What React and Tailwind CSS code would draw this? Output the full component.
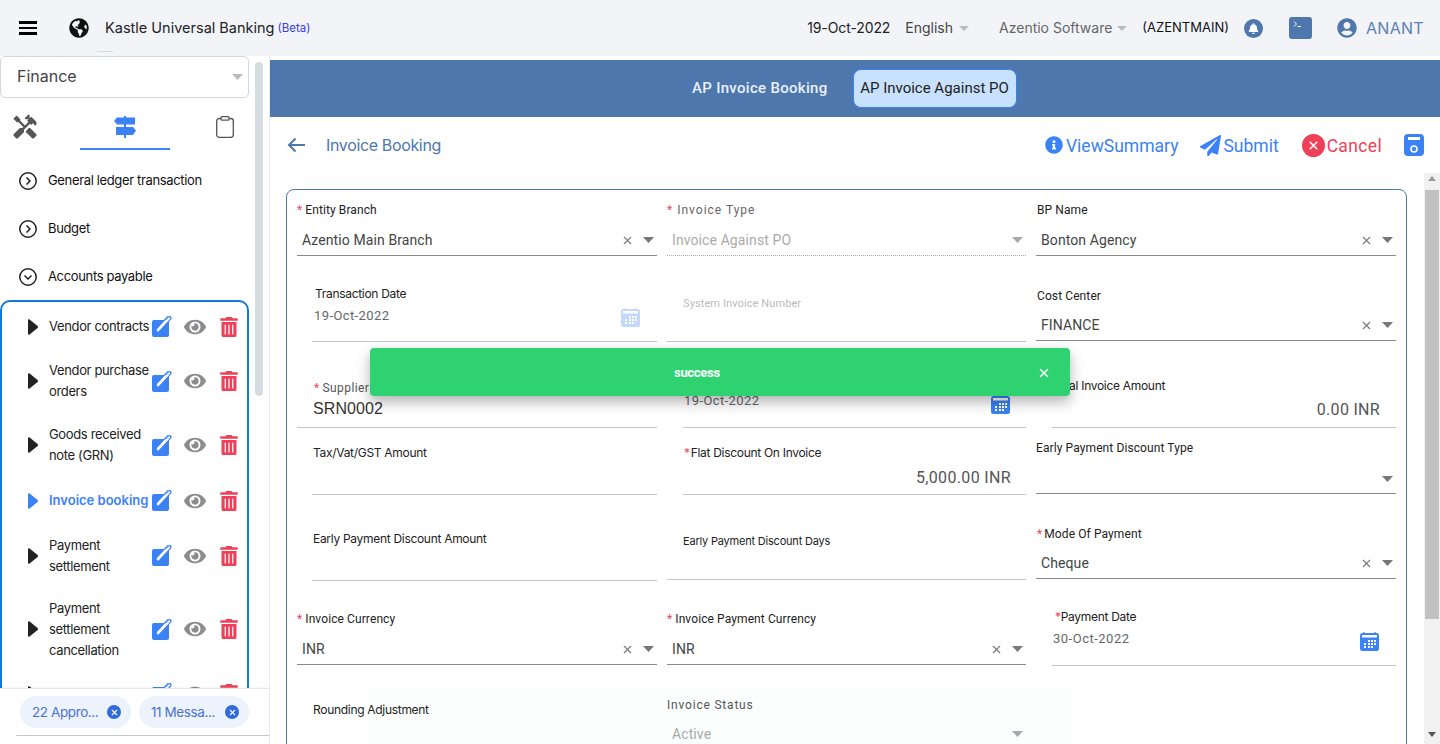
import { X } from 'lucide-react'
import {
  FaBell,
  FaEye,
  FaGlobeAmericas,
  FaInfoCircle,
  FaPaperPlane,
  FaTrashAlt,
  FaUserCircle,
} from 'react-icons/fa'
import { MdHandyman } from 'react-icons/md'

function Caret({ className = 'w-[11px] h-[6px] fill-[#777]' }) {
  return (
    <svg viewBox="0 0 12 7" preserveAspectRatio="none" className={className}>
      <path d="M0 0h12L6 7z" />
    </svg>
  )
}

function CircleChevron({ down }) {
  return (
    <svg viewBox="0 0 18 18" className="w-[18px] h-[18px] shrink-0 fill-none stroke-[#222] stroke-[1.5]">
      <circle cx="9" cy="9" r="8.200" />
      <path d={down ? 'M5.500 7.500 9 11l3.500-3.500' : 'M7.500 5.500 11 9l-3.500 3.500'} />
    </svg>
  )
}

function EditIcon() {
  return (
    <svg viewBox="0 0 20 21" className="w-5 h-[21px]">
      <rect x="0" y="4" width="17" height="17" rx="2" fill="#3b82f6" />
      <path d="M5 15 17 2" stroke="#3b82f6" strokeWidth="5" strokeLinecap="round" />
      <path d="M6 14 17 2" stroke="#fff" strokeWidth="2.600" strokeLinecap="round" />
      <path d="M13.500 4 19 0" stroke="#3b82f6" strokeWidth="0.800" />
    </svg>
  )
}

function SignsIcon() {
  return (
    <svg viewBox="0 0 24 22" className="w-6 h-[22px] fill-[#3b82f6]">
      <path d="M1 5 4 1.500h18v7H4z" />
      <path d="M3 11h17l3 3.500-3 4.500H3z" />
      <rect x="11" y="0" width="2" height="22" />
    </svg>
  )
}

function ClipboardIcon() {
  return (
    <svg viewBox="0 0 18 22" className="w-[18px] h-[22px] fill-none stroke-[#555] stroke-[1.300]">
      <rect x="0.700" y="2.500" width="16.600" height="18.800" rx="2.500" />
      <rect x="5" y="0.700" width="8" height="3.500" rx="1" fill="#fff" />
    </svg>
  )
}

function CalendarIcon({ faded }) {
  return (
    <svg viewBox="0 0 19 19" className={faded ? 'w-[19px] h-[19px] opacity-30 shrink-0' : 'w-[19px] h-[19px] shrink-0'}>
      <rect x="0" y="1" width="19" height="18" rx="2.500" fill="#3b82f6" />
      <rect x="2" y="3" width="15" height="2.500" fill="#fff" />
      <path d="M4 0v2M15 0v2" stroke="#3b82f6" strokeWidth="1.200" />
      <path
        d="M8 8h2v2H8zM11 8h2v2h-2zM14 8h2v2h-2zM4 11h2v2H4zM8 11h2v2H8zM11 11h2v2h-2zM14 11h2v2h-2zM4 14h2v2H4zM8 14h2v2H8zM11 14h2v2h-2z"
        fill="#fff"
      />
    </svg>
  )
}

function MenuRow({ label, height, active }) {
  return (
    <div className={`flex items-center pl-[26px] ${height}`}>
      <svg viewBox="0 0 10 16" className={active ? 'w-2.5 h-4 shrink-0 fill-[#3b82f6]' : 'w-2.5 h-4 shrink-0 fill-[#222]'}>
        <path d="M0 1.200C0 .2 1 0 1.600.4l8 6.600c.5.5.5 1.500 0 2l-8 6.600C1 16 0 15.800 0 14.800z" />
      </svg>
      <div
        className={
          active
            ? 'w-[103px] ml-[11px] text-[13px] leading-[21px] font-semibold text-[#3b82f6] whitespace-nowrap'
            : 'w-[103px] ml-[11px] text-[13px] leading-[21px] tracking-[-0.35px] text-[#222]'
        }
      >
        {label}
      </div>
      <EditIcon />
      <FaEye className="ml-3 text-[22px] text-[#8c8c8f] shrink-0" />
      <FaTrashAlt className="ml-[13px] text-[20px] text-[#ee4058] shrink-0" />
    </div>
  )
}

function Sidebar() {
  const groups = [
    { label: 'General ledger transaction' },
    { label: 'Budget' },
    { label: 'Accounts payable', open: true },
  ]
  const rows = [
    { label: 'Vendor contracts', height: 'h-[46px]' },
    { label: 'Vendor purchase orders', height: 'h-[63px]' },
    { label: 'Goods received note (GRN)', height: 'h-[65px]' },
    { label: 'Invoice booking', height: 'h-[46px]', active: true },
    { label: 'Payment settlement', height: 'h-[64px]' },
    { label: 'Payment settlement cancellation', height: 'h-[83px]' },
    { label: '', height: 'h-[46px]' },
  ]
  return (
    <aside className="w-[270px] h-[688px] shrink-0 flex flex-col border-r border-[#e8eaee] font-['Inter',sans-serif]">
      <div className="flex h-[632px] overflow-hidden shrink-0">
        <div className="w-[249px] shrink-0">
          <div className="h-[42px] flex items-center justify-between pl-4 pr-[5px] rounded-[5px] border border-[#d5d7dc] text-[16px] text-[#444]">
            <span className="mb-[2px]">Finance</span>
            <Caret className="w-[11px] h-[6px] fill-[#bbb]" />
          </div>
          <div className="h-[52px] flex">
            <div className="w-[80px] pl-[11px] pt-[15px]">
              <MdHandyman className="text-[28px] text-[#555]" />
            </div>
            <div className="w-[90px] flex justify-center pt-[18px] border-b-2 border-[#3b82f6]">
              <SignsIcon />
            </div>
            <div className="w-[79px] pl-[46px] pt-[18px]">
              <ClipboardIcon />
            </div>
          </div>
          <div className="pt-[7px]">
            {groups.map((g) => (
              <div key={g.label} className="h-[48px] flex items-center gap-[11px] pl-[19px] text-[13px] tracking-[-0.35px] text-[#111]">
                <CircleChevron down={g.open} />
                {g.label}
              </div>
            ))}
          </div>
          <div className="mt-[-1.5px] h-[420px] rounded-t-[10px] border-2 border-[#0f7bd6] pt-[2px]">
            {rows.map((r, i) => (
              <MenuRow key={i} {...r} />
            ))}
          </div>
        </div>
        <div className="w-2 h-[334px] mt-[6px] ml-[6px] rounded bg-[#d5dde0]" />
      </div>
      <div className="h-[56px] border-t border-[#e6e6e6] pt-[7px] shadow-[0_-1px_2px_rgba(0,0,0,0.04)]">
        <div className="flex gap-2 pl-5">
          <div className="w-[111px] h-8 rounded-2xl bg-[#edf3fd] flex items-center justify-between pl-3 pr-[10px] text-[13.500px] text-[#4a72d6] tracking-[-0.4px]">
            <span>22 Appro...</span>
            <span className="w-[14px] h-[14px] rounded-full bg-[#2f6bdc] flex items-center justify-center">
              <X size={9} color="#fff" strokeWidth={3} />
            </span>
          </div>
          <div className="w-[110px] h-8 rounded-2xl bg-[#edf3fd] flex items-center justify-between pl-3 pr-[10px] text-[13.500px] text-[#4a72d6] tracking-[-0.4px]">
            <span>11 Messa...</span>
            <span className="w-[14px] h-[14px] rounded-full bg-[#2f6bdc] flex items-center justify-center">
              <X size={9} color="#fff" strokeWidth={3} />
            </span>
          </div>
        </div>
        <div className="ml-4 mt-[7px] border-t border-[#c8c8c8]" />
      </div>
    </aside>
  )
}

function Header() {
  return (
    <header className="h-14 bg-[#f3f4f8] flex items-center font-['Inter',sans-serif]">
      <div className="ml-[19px] w-[18px] flex flex-col gap-[3px]">
        <div className="h-[2.500px] bg-black" />
        <div className="h-[2.500px] bg-black" />
        <div className="h-[2.500px] bg-black" />
      </div>
      <FaGlobeAmericas className="ml-[32px] text-[20px] text-[#111]" />
      <div className="ml-4 text-[14.500px] text-[#222]">Kastle Universal Banking</div>
      <div className="ml-[3px] mt-[2px] text-[11.500px] text-[#3b3bf0]">(Beta)</div>
      <div className="ml-auto flex items-center pr-4">
        <div className="mb-[2px] text-[14px] tracking-[-0.1px] text-[#222]">19-Oct-2022</div>
        <div className="ml-[15px] mb-[2px] text-[14px] text-[#444]">English</div>
        <Caret className="ml-[6px] w-[10px] h-[5px] fill-[#bbb]" />
        <div className="ml-[30px] mb-[2px] text-[14px] text-[#666]">Azentio Software</div>
        <Caret className="ml-[5px] w-[10px] h-[5px] fill-[#bbb]" />
        <div className="ml-[15px] text-[13px] text-[#111]">(AZENTMAIN)</div>
        <div className="ml-[15px] w-[19px] h-[19px] rounded-full bg-[#4e77ad] flex items-center justify-center">
          <FaBell className="text-[11px] text-white" />
        </div>
        <div className="ml-[26px] w-[23px] h-[22px] rounded-[3px] bg-[#4e77ad] flex items-start pl-1 pt-1">
          <svg viewBox="0 0 9 7" className="w-[9px] h-[7px] fill-none stroke-white">
            <path d="M1 0.500 3.500 3 1 5.500M4.500 5.500H8" />
          </svg>
        </div>
        <FaUserCircle className="ml-[25px] text-[20px] text-[#4e77ad]" />
        <div className="ml-[9px] text-[16px] text-[#5a82b4] tracking-[0.3px]">ANANT</div>
      </div>
    </header>
  )
}

function Req({ className = 'mr-[3px]' }) {
  return <span className={`text-[#ef4561] ${className}`}>*</span>
}

function SelectRow({ value, muted, noClear, className = 'mb-[5px] pl-[5px]' }) {
  return (
    <div className={`mt-auto h-5 flex items-center pr-[3px] text-[14px] leading-5 tracking-[0.1px] ${className}`}>
      <span className={muted ? 'flex-1 text-[#aaa]' : 'flex-1 text-[#444]'}>{value}</span>
      {!muted && !noClear && <X size={13} color="#777" className="mr-[9px]" />}
      <Caret className={muted ? 'w-[11px] h-[6px] fill-[#aaa]' : 'w-[11px] h-[6px] fill-[#777]'} />
    </div>
  )
}

function Field({ className = 'border-[#8a8a8a]', children }) {
  return <div className={`flex flex-col min-w-0 text-[12px] leading-4 tracking-[0.1px] text-[#222] border-b ${className}`}>{children}</div>
}

const soft = 'border-[#c4c4c4]'
const inter = "font-['Inter',sans-serif] tracking-[-0.3px]"

function FormGrid() {
  const row = 'grid grid-cols-[360px_359px_360px] gap-x-[10px]'
  return (
    <div className="pl-[10px] font-['Roboto',sans-serif]">
      <div className={`${row} h-[66px]`}>
        <Field>
          <div className="pt-3"><Req />Entity Branch</div>
          <SelectRow value="Azentio Main Branch" />
        </Field>
        <Field className="border-dotted border-[#aaa]">
          <div className="pt-3 tracking-[1px] text-[#666]"><Req className="mr-[4px]" />Invoice Type</div>
          <SelectRow value="Invoice Against PO" muted />
        </Field>
        <Field>
          <div className="pt-3 pl-px">BP Name</div>
          <SelectRow value="Bonton Agency" className="mb-[5px] pl-[5px]" />
        </Field>
      </div>

      <div className={`${row} h-[86px]`}>
        <Field className={`ml-[15px] ${soft}`}>
          <div className={`pt-[30px] pl-[3px] ${inter}`}>Transaction Date</div>
          <div className="mt-1 pl-[2px] pr-[17px] flex justify-between items-start">
            <span className="h-5 text-[13px] leading-5 tracking-[0.4px] text-[#666]">19-Oct-2022</span>
            <span className="mt-[2px]"><CalendarIcon faded /></span>
          </div>
        </Field>
        <Field className={soft}>
          <div className="pt-10 pl-4 text-[11px] text-[#bbb]">System Invoice Number</div>
        </Field>
        <Field className="mb-px border-[#8a8a8a]">
          <div className="pt-8 pl-px">Cost Center</div>
          <SelectRow value="FINANCE" />
        </Field>
      </div>

      <div className={`${row} h-[86px]`}>
        <Field className={soft}>
          <div className="pt-[38px] pl-[17px] tracking-[0.4px] text-[#555]"><Req />Supplier Invoice Number</div>
          <div className="mt-[3px] pl-4 text-[16px] leading-5 text-[#333] font-['Liberation_Sans',sans-serif]">SRN0002</div>
        </Field>
        <Field className={`ml-4 ${soft}`}>
          <div className="pt-9 pl-px"><Req />Invoice Date</div>
          <div className="-mt-[3px] pl-px pr-4 flex justify-between items-start">
            <span className="h-5 text-[13px] leading-5 tracking-[0.4px] text-[#666]">19-Oct-2022</span>
            <span className="mt-1"><CalendarIcon /></span>
          </div>
        </Field>
        <Field className={`ml-4 ${soft}`}>
          <div className={`pt-9 ${inter}`}>Total Invoice Amount</div>
          <div className="mt-[6px] pr-4 text-right text-[16px] leading-5 tracking-[0.3px] text-[#555]">0.00 INR</div>
        </Field>
      </div>

      <div className={`${row} h-[67px]`}>
        <Field className={`ml-[15px] ${soft}`}>
          <div className={`pt-[17px] pl-px ${inter}`}>Tax/Vat/GST Amount</div>
        </Field>
        <Field className={`ml-4 ${soft}`}>
          <div className={`pt-[17px] pl-px ${inter}`}><Req className="mr-px" />Flat Discount On Invoice</div>
          <div className="mt-auto mb-[6px] pr-[15px] text-right text-[16px] leading-5 tracking-[0.35px] text-[#555]">5,000.00 INR</div>
        </Field>
        <Field className="mb-px border-[#8a8a8a]">
          <div className="pt-3">Early Payment Discount Type</div>
          <SelectRow value="" noClear className="mb-[4px] pl-[5px]" />
        </Field>
      </div>

      <div className={`${row} h-[86px]`}>
        <Field className={`ml-[15px] ${soft}`}>
          <div className={`pt-9 pl-px ${inter}`}>Early Payment Discount Amount</div>
        </Field>
        <Field className={`mb-px ${soft}`}>
          <div className="pt-[38px] pl-4 text-[11px] font-['Inter',sans-serif] tracking-[-0.2px]">Early Payment Discount Days</div>
        </Field>
        <Field className="mb-[2px] border-[#8a8a8a]">
          <div className="pt-[31px] pl-px"><Req className="mr-[2px]" />Mode Of Payment</div>
          <SelectRow value="Cheque" />
        </Field>
      </div>

      <div className={`${row} h-[84px]`}>
        <Field>
          <div className="pt-[30px]"><Req />Invoice Currency</div>
          <SelectRow value="INR" />
        </Field>
        <Field>
          <div className="pt-[30px]"><Req />Invoice Payment Currency</div>
          <SelectRow value="INR" />
        </Field>
        <Field className={`ml-4 mb-[-1px] ${soft}`}>
          <div className={`pt-7 pl-[3px] ${inter}`}><Req className="mr-0" />Payment Date</div>
          <div className="mt-1 pl-px pr-[17px] flex justify-between items-start">
            <span className="h-5 text-[13px] leading-5 tracking-[0.5px] text-[#666]">30-Oct-2022</span>
            <span className="mt-[3px]"><CalendarIcon /></span>
          </div>
        </Field>
      </div>

      <div className={`${row} h-[84px]`}>
        <div className={`pt-[37px] pl-4 text-[12px] leading-4 text-[#222] ${inter}`}>Rounding Adjustment</div>
        <Field className="border-transparent">
          <div className="pt-8 tracking-[0.8px] text-[#555]">Invoice Status</div>
          <SelectRow value="Active" muted className="mb-[4px] pl-[5px]" />
        </Field>
      </div>
    </div>
  )
}

function Main() {
  return (
    <main className="flex-1 min-w-0 h-[688px] flex flex-col pt-1 font-['Roboto',sans-serif]">
      <div className="h-[57px] shrink-0 bg-[#4e77ad] flex items-center pl-[422px] text-[15px]">
        <div className="text-[#e8f0fc] font-medium tracking-[0.3px]">AP Invoice Booking</div>
        <div className="ml-[25px] mt-[-1px] w-[164px] h-[39px] rounded-lg border border-[#3b82f6] bg-[#c8e1fe] flex items-center justify-center text-[#222]">
          AP Invoice Against PO
        </div>
      </div>

      <div className="h-[56px] shrink-0 flex items-center">
        <svg viewBox="0 0 18 16" className="ml-[17px] w-[18px] h-4 fill-none stroke-[#4e77ad] stroke-2">
          <path d="M18 8H2M8.500 1.500 2 8l6.500 6.500" />
        </svg>
        <div className="ml-[21px] text-[16px] text-[#4e77ad] font-['Inter',sans-serif] tracking-[-0.35px]">Invoice Booking</div>
        <div className="ml-auto flex items-center pr-4 text-[17.500px]">
          <FaInfoCircle className="text-[18px] text-[#3b82f6]" />
          <span className="ml-[3px] mt-[2px] text-[#3b82f6]">ViewSummary</span>
          <FaPaperPlane className="ml-[22px] text-[21px] text-[#3b82f6]" />
          <span className="ml-[2px] mt-[2px] text-[#3b82f6]">Submit</span>
          <span className="ml-[23px] w-[23px] h-[23px] rounded-full bg-[#ee4058] flex items-center justify-center">
            <X size={13} color="#fff" strokeWidth={3} />
          </span>
          <span className="ml-[2px] mt-[2px] tracking-[0.35px] text-[#ee4058]">Cancel</span>
          <svg viewBox="0 0 20 22" className="ml-[22px] w-5 h-[22px]">
            <rect width="20" height="22" rx="4" fill="#3b82f6" />
            <rect x="4" y="3" width="12" height="3" fill="#fff" />
            <circle cx="10" cy="15" r="3" fill="none" stroke="#fff" strokeWidth="1.600" />
          </svg>
        </div>
      </div>

      <div className="flex-1 min-h-0 flex overflow-visible">
        <div className="w-[1154px] pl-4 pr-[17px] pt-4 h-[571px] overflow-hidden">
          <div className="h-[620px] rounded-lg border border-[#4e77ad]">
            <FormGrid />
          </div>
        </div>
        <div className="w-4 h-[571px] shrink-0 bg-[#f1f1f1] flex flex-col items-center pt-[3px]">
          <Caret className="w-2 h-[5px] rotate-180 fill-[#999]" />
          <div className="mt-[9px] w-[14px] h-[429px] bg-[#c1c1c1]" />
          <Caret className="mt-[113px] w-2 h-[5px] fill-[#555]" />
        </div>
      </div>
    </main>
  )
}

export default function App() {
  return (
    <div className="relative w-[1440px] h-[744px] overflow-hidden bg-white">
      <Header />
      <div className="absolute left-[97px] top-[51px] w-4 h-px bg-[#d9d9d9]" />
      <div className="flex">
        <Sidebar />
        <Main />
      </div>

      <div className="absolute left-[370px] top-[348px] w-[700px] h-[48px] rounded bg-[#2ed271] shadow-[0_6px_14px_rgba(0,0,0,0.3)] flex items-center justify-between pl-[304px] pr-[20px] font-['Roboto',sans-serif]">
        <span className="mt-[2px] text-[13px] font-bold tracking-[-0.3px] text-white">success</span>
        <X size={14} color="#fff" strokeWidth={2.500} className="mr-[-1px] mt-px" />
      </div>
      <div className="absolute left-[368px] top-[688px] w-[704px] h-[56px] rounded bg-[#2ed271]/[0.015]" />
    </div>
  )
}
